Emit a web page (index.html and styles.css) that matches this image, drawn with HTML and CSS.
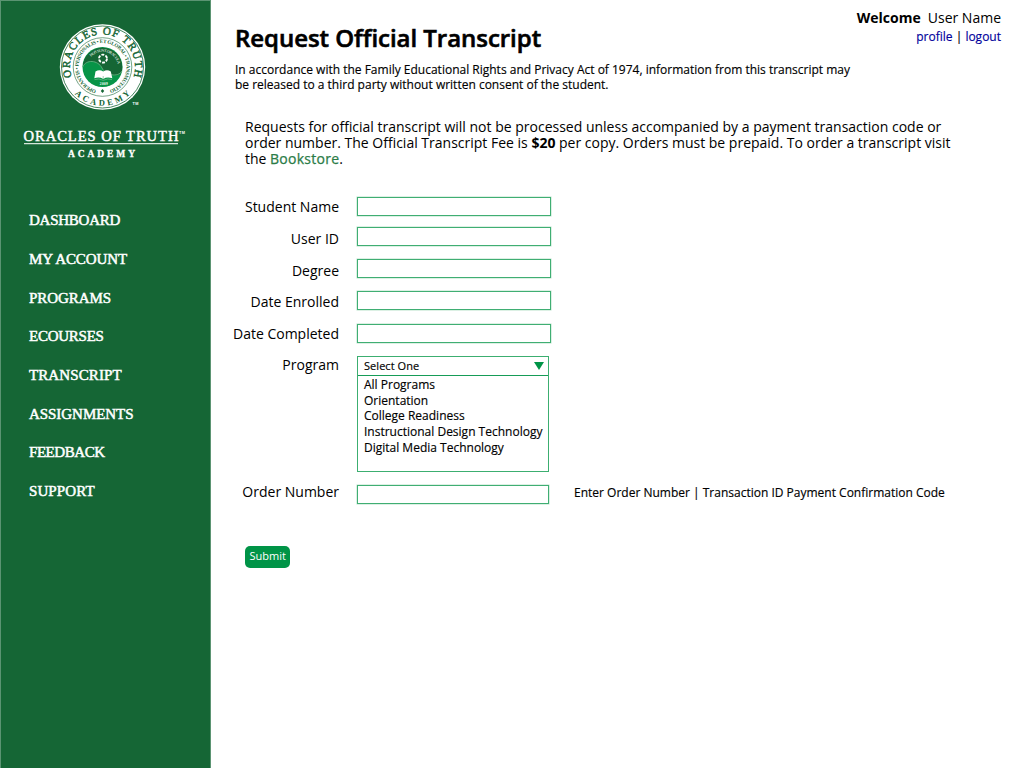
FILE: index.html
```html
<!DOCTYPE html>
<html lang="en">
<head>
<meta charset="utf-8">
<title>Request Official Transcript</title>
<link rel="stylesheet" href="styles.css">
</head>
<body>
<div class="page">
  <aside class="sidebar">
    <svg class="logo" width="210" height="170" viewBox="0 0 210 170" role="img" aria-label="Oracles of Truth Academy">
      <defs>
        <path id="arc-name" d="M71.6 77 A32.5 32.5 0 1 1 133.4 77"/>
        <path id="arc-academy" d="M64.4 75 A39 39 0 0 0 140.6 75"/>
        <path id="arc-motto" d="M96.3 90.2 A24 24 0 1 1 108.7 90.2"/>
        <path id="arc-inner" d="M91 56.8 A15.5 15.5 0 0 1 117.8 69.5"/>
      </defs>
      <circle cx="102.5" cy="67" r="42.7" fill="#fff"/>
      <circle cx="102.5" cy="67" r="41" fill="none" stroke="#156635" stroke-width=".8"/>
      <circle cx="102.5" cy="67" r="29.3" fill="none" stroke="#156635" stroke-width=".6"/>
      <text class="seal-name"><textPath href="#arc-name" startOffset="0" textLength="122">ORACLES OF TRUTH</textPath></text>
      <text class="seal-academy"><textPath href="#arc-academy" startOffset="50%" text-anchor="middle" textLength="62">ACADEMY</textPath></text>
      <text class="seal-motto"><textPath href="#arc-motto" startOffset="0" textLength="137">OPERANTIS • PERSONALIS • ET GLOBAL • TRANSMUTATIO</textPath></text>
      <path d="M102.5 89L104.2 91L102.5 93L100.8 91Z" fill="#156635"/>
      <circle cx="102.5" cy="67" r="20" fill="#079447"/>
      <path d="M82.7 67 A19.8 19.8 0 1 1 122 71 C119 79 105 75 102 68 C98 60 86 59 82.7 67Z" fill="#156635"/>
      <path d="M82.7 67 C86 59 98 60 102 68 C105 75 118 78 122 71" fill="none" stroke="#6db886" stroke-width=".8"/>
      <text class="seal-inner"><textPath href="#arc-inner" textLength="34">HOS SUNT ORACULA</textPath></text>
      <circle cx="103" cy="58.6" r="4" fill="none" stroke="#fff" stroke-width="1.9" stroke-dasharray="2.9 1.29"/>
      <path d="M95.5 71.5 Q99.5 69.2 103.2 71.5 Q107 69.2 110.8 71.5 L112.3 78.3 Q107 76.5 103.3 79 Q99 76.5 94.3 78.3Z" fill="#fff"/>
      <path d="M103.2 76V79M94.5 79.6Q99 78 103.2 80.3Q108 78 112 79.6" fill="none" stroke="#79ba92" stroke-width=".7"/>
      <text class="seal-year" x="99.8" y="84.7" textLength="8">2009</text>
      <text class="tm" x="132.5" y="105" textLength="6">TM</text>
      <text class="brand" x="23.5" y="140.6" textLength="155">ORACLES OF TRUTH</text>
      <text class="tm" x="179" y="133.5" textLength="6">TM</text>
      <path d="M24 143.7H178" stroke="#d5e6db" stroke-width="1.2"/>
      <text class="brand-sub" x="68" y="156.5" textLength="67">ACADEMY</text>
    </svg>
    <nav class="nav">
      <a class="nav-item">DASHBOARD</a>
      <a class="nav-item nav-account">MY ACCOUNT</a>
      <a class="nav-item nav-programs">PROGRAMS</a>
      <a class="nav-item">ECOURSES</a>
      <a class="nav-item nav-transcript">TRANSCRIPT</a>
      <a class="nav-item nav-assignments">ASSIGNMENTS</a>
      <a class="nav-item nav-feedback">FEEDBACK</a>
      <a class="nav-item nav-support">SUPPORT</a>
    </nav>
  </aside>
  <main class="main">
    <header class="header">
      <div class="heading">
        <h1 class="title">Request Official Transcript</h1>
        <p class="notice">In accordance with the Family Educational Rights and Privacy Act of 1974, information from this transcript may<br>be released to a third party without written consent of the student.</p>
      </div>
      <div class="account">
        <div class="welcome"><b>Welcome</b><span class="user">User Name</span></div>
        <div class="links"><a>profile</a> | <a>logout</a></div>
      </div>
    </header>
    <p class="intro">Requests for official transcript will not be processed unless accompanied by a payment transaction code or<br>order number. The Official Transcript Fee is <b>$20</b> per copy. Orders must be prepaid. To order a transcript visit<br>the <a class="bookstore">Bookstore</a>.</p>
    <form class="form">
      <div class="row row-name"><label class="label">Student Name</label><input class="field"></div>
      <div class="row row-user"><label class="label">User ID</label><input class="field"></div>
      <div class="row row-degree"><label class="label">Degree</label><input class="field"></div>
      <div class="row row-enrolled"><label class="label">Date Enrolled</label><input class="field"></div>
      <div class="row row-completed"><label class="label">Date Completed</label><input class="field"></div>
      <div class="row row-program"><label class="label">Program</label>
        <div class="select">
          <div class="select-head"><span>Select One</span><svg width="10" height="8" viewBox="0 0 10 8"><path d="M0 0H10L5 8Z" fill="#009447"/></svg></div>
          <ul class="options">
            <li>All Programs</li>
            <li>Orientation</li>
            <li>College Readiness</li>
            <li>Instructional Design Technology</li>
            <li>Digital Media Technology</li>
          </ul>
        </div>
      </div>
      <div class="row row-order"><label class="label">Order Number</label><input class="field field-order"><span class="hint">Enter Order Number | Transaction ID Payment Confirmation Code</span></div>
      <button class="submit" type="button">Submit</button>
    </form>
  </main>
</div>
</body>
</html>
```
FILE: styles.css
```css
* { box-sizing: border-box; }
body { margin: 0; font-family: "Open Sans", sans-serif; color: #000; background: #fff; }
h1, p, ul { margin: 0; padding: 0; }
.page { display: flex; height: 768px; overflow: hidden; }
.sidebar { width: 211px; flex: none; background: #156635; border: 1px solid #5b9472; border-width: 1px 1px 0 1px; }
.logo { display: block; margin: -1px 0 0 -1px; }
.logo text { font-family: "Liberation Serif", serif; }
.seal-name { font-size: 11px; fill: #156635; stroke: #156635; stroke-width: .45px; }
.seal-academy { font-size: 8.5px; font-weight: bold; fill: #156635; }
.seal-motto { font-size: 5.2px; font-weight: bold; fill: #156635; }
.seal-inner { font-size: 4px; font-weight: bold; fill: #c7dfce; }
.seal-year { font-size: 3.5px; font-weight: bold; fill: #fff; }
.logo .tm { font-family: "Liberation Sans", sans-serif; font-size: 3.8px; font-weight: bold; fill: #fff; }
.brand { font-size: 14.6px; fill: #fff; stroke: #fff; stroke-width: .45px; }
.brand-sub { font-size: 9.5px; font-weight: bold; fill: #fff; stroke: #fff; stroke-width: .3px; }
.nav { display: flex; flex-direction: column; padding: 31px 0 0 28px; }
.nav-item { height: 38.7px; line-height: 38.7px; font-family: "Liberation Serif", serif; font-size: 15px; letter-spacing: -.25px; color: #fff; -webkit-text-stroke: .5px #fff; }
.nav-account { letter-spacing: -.1px; word-spacing: 0; }
.nav-programs { line-height: 40px; letter-spacing: -.05px; }
.nav-transcript { letter-spacing: .1px; }
.nav-assignments { line-height: 40px; letter-spacing: -.05px; }
.nav-feedback { letter-spacing: -.45px; }
.nav-support { letter-spacing: .1px; }
.main { flex: 1; padding: 0 23px 0 24px; }
.header { display: flex; justify-content: space-between; height: 119px; }
.heading { padding-top: 22px; white-space: nowrap; }
.title { font-size: 24px; font-weight: 600; line-height: 32px; letter-spacing: -.04px; -webkit-text-stroke: .6px #000; }
.notice { margin-top: 8px; font-size: 12px; line-height: 15px; }
.notice, .options, .hint, .links, .select-head span { -webkit-text-stroke: .15px currentColor; }
.links a { -webkit-text-stroke: .15px currentColor; }
.account { padding-top: 8px; text-align: right; white-space: nowrap; }
.welcome { font-size: 14px; line-height: 20px; }
.user { margin-left: 7px; }
.links { font-size: 12px; line-height: 18px; }
.links a { color: #00009b; }
.intro { padding-left: 10px; font-size: 14px; line-height: 16px; white-space: nowrap; }
.bookstore { color: #2b7c47; letter-spacing: .25px; -webkit-text-stroke: .25px #2b7c47; }
.form { padding-top: 30px; }
.row { display: flex; align-items: flex-start; height: 32px; }
.label { width: 104px; margin-right: 18px; font-size: 14px; line-height: 20px; display: flex; justify-content: flex-end; white-space: nowrap; }
.field { width: 194px; height: 19px; padding: 0 6px; border: 1px solid #3fae73; box-shadow: 0 0 0 .5px #b9e2ca; background: #fff; font: 12px "Open Sans", sans-serif; }
.row-name { height: 30px; }
.row-user .label, .row-degree .label { padding-top: 2px; }
.row-enrolled { height: 33px; }
.row-enrolled .label { padding-top: 1px; }
.row-completed { height: 32px; }
.row-program { height: 129px; }
.row-program .label { line-height: 17px; }
.select { width: 192px; height: 116px; border: 1px solid #3cae70; font-size: 12px; }
.select-head { display: flex; justify-content: space-between; align-items: center; height: 19px; padding: 0 4px 0 6px; border-bottom: 1px solid #169c57; font-size: 11px; line-height: 15px; }
.select-head span { padding-bottom: 2px; letter-spacing: .05px; }
.options { list-style: none; padding: 1px 0 0 6px; line-height: 15.7px; white-space: nowrap; }
.row-order { height: 61px; }
.row-order .label { line-height: 13px; }
.field-order { width: 192px; }
.hint { margin-left: 25px; font-size: 12px; line-height: 15px; white-space: nowrap; }
.submit { display: block; margin-left: 10px; width: 44.5px; height: 21.5px; border: 0; border-radius: 5px; padding: 0 0 2px 1px; background: #009447; color: #fff; font: 11px/20px "Open Sans", sans-serif; }
```
